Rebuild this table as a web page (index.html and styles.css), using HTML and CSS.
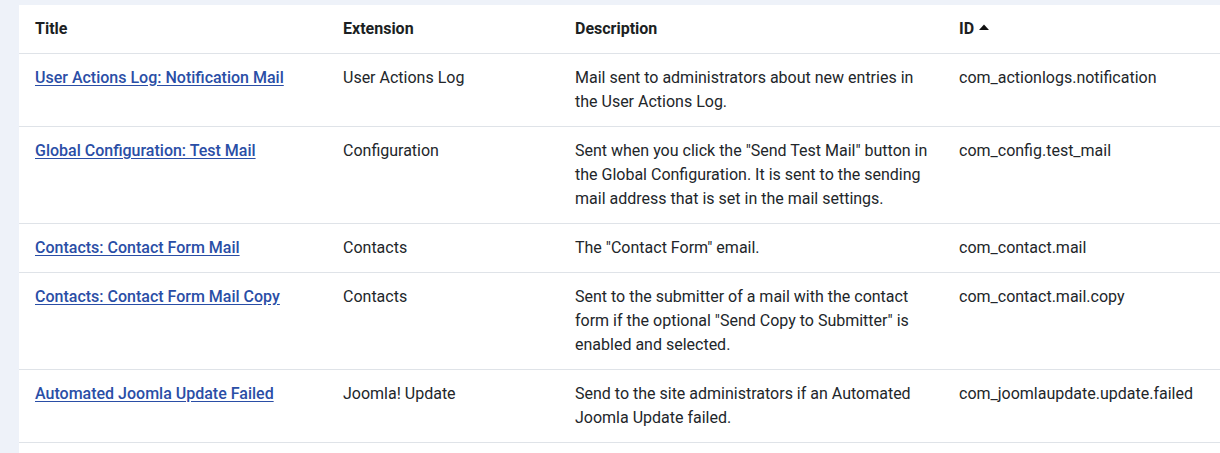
FILE: index.html
```html
<!DOCTYPE html>
<html lang="en">
<head>
<meta charset="utf-8">
<title>Mail Templates</title>
<link rel="stylesheet" href="styles.css">
</head>
<body>
<main class="page">
  <div class="card">
    <table class="list">
      <colgroup>
        <col class="c-title"><col class="c-ext"><col class="c-desc"><col class="c-id">
      </colgroup>
      <thead>
        <tr>
          <th>Title</th>
          <th>Extension</th>
          <th class="desc">Description</th>
          <th>ID <svg class="caret" width="10" height="6" viewBox="0 0 10 6"><path d="M0 6 L5 0.5 L10 6 Z" fill="#111"/></svg></th>
        </tr>
      </thead>
      <tbody>
        <tr>
          <td><a href="#">User Actions Log: Notification Mail</a></td>
          <td>User Actions Log</td>
          <td class="desc">Mail sent to administrators about new entries in the User Actions Log.</td>
          <td>com_actionlogs.notification</td>
        </tr>
        <tr>
          <td><a href="#">Global Configuration: Test Mail</a></td>
          <td>Configuration</td>
          <td class="desc">Sent when you click the "Send Test Mail" button in the Global Configuration. It is sent to the sending mail address that is set in the mail settings.</td>
          <td>com_config.test_mail</td>
        </tr>
        <tr>
          <td><a href="#">Contacts: Contact Form Mail</a></td>
          <td>Contacts</td>
          <td class="desc">The "Contact Form" email.</td>
          <td>com_contact.mail</td>
        </tr>
        <tr>
          <td><a href="#">Contacts: Contact Form Mail Copy</a></td>
          <td>Contacts</td>
          <td class="desc">Sent to the submitter of a mail with the contact form if the optional "Send Copy to Submitter" is enabled and selected.</td>
          <td>com_contact.mail.copy</td>
        </tr>
        <tr>
          <td><a href="#">Automated Joomla Update Failed</a></td>
          <td>Joomla! Update</td>
          <td class="desc">Send to the site administrators if an Automated Joomla Update failed.</td>
          <td>com_joomlaupdate.update.failed</td>
        </tr>
      </tbody>
    </table>
  </div>
</main>
</body>
</html>
```
FILE: styles.css
```css
html, body {
  margin: 0;
  padding: 0;
  background: #eef2f9;
  overflow: hidden;
}
body {
  font-family: Roboto, "Liberation Sans", sans-serif;
  font-size: 16px;
  line-height: 24px;
  color: #22262a;
}
.page {
  padding: 5px 0 0 19px;
}
.card {
  background: #fff;
  width: 1240px;
  min-height: 460px;
}
.list {
  width: 100%;
  border-collapse: collapse;
  table-layout: fixed;
}
.c-title { width: 308px; }
.c-ext { width: 232px; }
.c-desc { width: 384px; }
.list th,
.list td {
  text-align: left;
  vertical-align: top;
  padding: 12px 16px;
  border-bottom: 1px solid #dfe3e8;
}
.list .desc {
  padding-right: 4px;
}
.list th {
  font-weight: 700;
  color: #1c1f23;
}
.list a {
  color: #2a4ea6;
  font-weight: 500;
  text-decoration: underline;
  text-underline-offset: 2px;
}
.caret {
  display: inline-block;
  vertical-align: 4px;
  margin-left: 1px;
}
```
